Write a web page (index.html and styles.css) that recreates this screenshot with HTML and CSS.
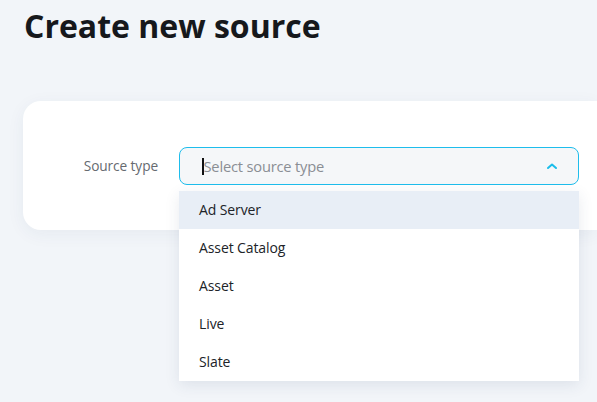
FILE: index.html
```html
<!DOCTYPE html>
<html>
<head>
<meta charset="utf-8">
<link rel="stylesheet" href="styles.css">
</head>
<body>
<div class="page">
  <h1 class="title">Create new source</h1>
  <div class="card">
    <div class="field">
      <label class="label">Source type</label>
      <div class="select-wrap">
        <div class="select">
          <span class="caret"></span><span class="placeholder">Select source type</span>
          <svg class="chevron" width="12" height="8" viewBox="0 0 12 8"><path d="M2 6 L6 2.5 L10 6" fill="none" stroke="#1bbdea" stroke-width="2" stroke-linecap="round" stroke-linejoin="round"/></svg>
        </div>
        <ul class="menu">
          <li class="item active">Ad Server</li>
          <li class="item">Asset Catalog</li>
          <li class="item">Asset</li>
          <li class="item">Live</li>
          <li class="item">Slate</li>
        </ul>
      </div>
    </div>
  </div>
</div>
</body>
</html>
```

FILE: styles.css
```css
html, body {
  margin: 0;
  padding: 0;
  background: #f2f5f9;
  font-family: "Open Sans", "Noto Sans", sans-serif;
}
.page {
  padding: 6px 0 0 23px;
  min-height: 396px;
}
.title {
  margin: 0 0 0 1px;
  font-size: 32px;
  font-weight: 700;
  color: #16181c;
  letter-spacing: 0;
  line-height: 40px;
}
.card {
  margin-top: 55px;
  background: #fff;
  border-radius: 18px 0 0 18px;
  height: 129px;
  box-shadow: 0 4px 18px rgba(40, 60, 100, 0.06);
  box-sizing: border-box;
  padding-top: 46px;
}
.field {
  display: flex;
  align-items: flex-start;
}
.label {
  width: 135px;
  text-align: right;
  font-size: 13.7px;
  color: #666a70;
  line-height: 38px;
  letter-spacing: -0.1px;
}
.select-wrap {
  position: relative;
  margin-left: 21px;
  width: 400px;
}
.select {
  height: 38px;
  box-sizing: border-box;
  border: 1px solid #1ebdec;
  border-radius: 8px;
  background: #f5f7f9;
  display: flex;
  align-items: center;
  padding-left: 22px;
  padding-right: 20px;
}
.caret {
  display: inline-block;
  width: 1.5px;
  height: 17px;
  background: #111;
}
.placeholder {
  font-size: 14.7px;
  color: #8a8e94;
  flex: 1;
  letter-spacing: -0.2px;
}
.chevron {
  display: block;
}
.menu {
  position: absolute;
  top: 44px;
  left: 0;
  width: 400px;
  margin: 0;
  padding: 0;
  list-style: none;
  background: #fff;
  box-shadow: 0 4px 14px rgba(40, 60, 100, 0.10);
  z-index: 10;
}
.item {
  display: block;
  height: 38px;
  line-height: 38px;
  padding-left: 20px;
  font-size: 14px;
  color: #202328;
  letter-spacing: -0.1px;
}
.item.active {
  background: #e8eef6;
}
```
